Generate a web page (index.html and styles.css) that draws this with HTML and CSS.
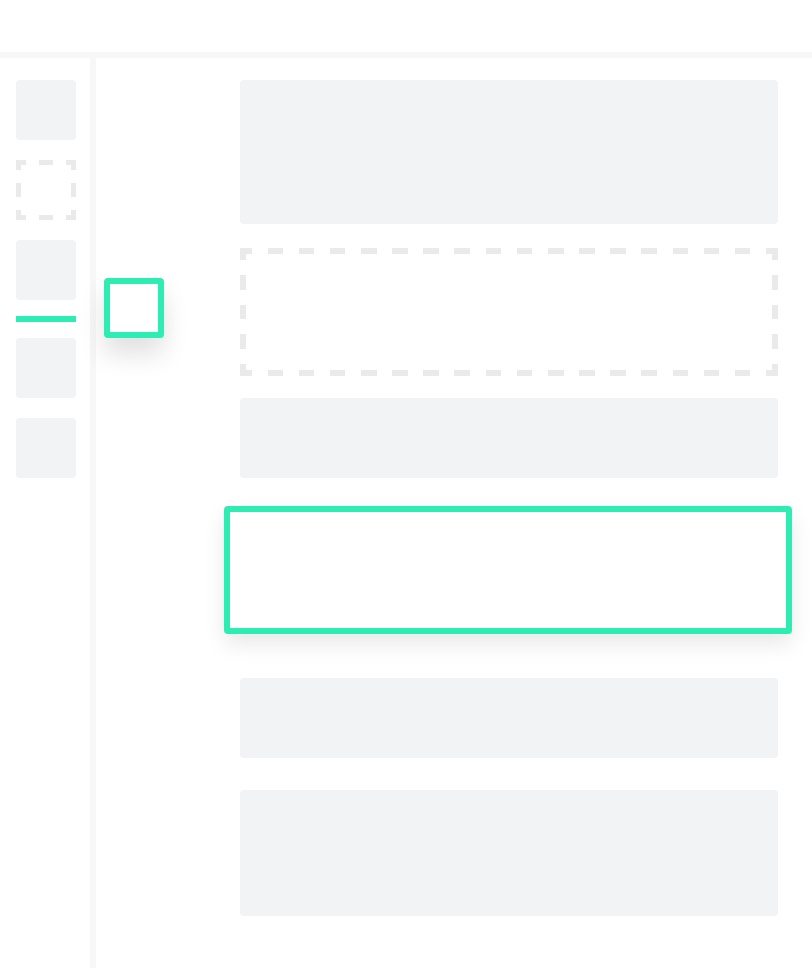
FILE: index.html
```html
<!DOCTYPE html>
<html>
<head>
<meta charset="utf-8">
<link rel="stylesheet" href="styles.css">
</head>
<body>
<header class="topbar"></header>
<div class="layout">
  <aside class="sidebar">
    <div class="tile"></div>
    <div class="tile tile-dashed"></div>
    <div class="tile"></div>
    <div class="indicator"></div>
    <div class="tile"></div>
    <div class="tile"></div>
  </aside>
  <main class="content">
    <div class="block block-tall"></div>
    <div class="block block-dashed"></div>
    <div class="block block-short"></div>
    <div class="block block-active"></div>
    <div class="block block-short after-active"></div>
    <div class="block block-mid"></div>
  </main>
  <div class="drag-tile"></div>
</div>
</body>
</html>
```
FILE: styles.css
```css
* { box-sizing: border-box; }
html, body { margin: 0; padding: 0; background: #fff; }
body { width: 812px; height: 968px; overflow: hidden; position: relative; font-family: "Liberation Sans", sans-serif; }

.topbar { height: 58px; border-bottom: 6px solid #f7f7f7; background: #fff; }

.layout { display: flex; height: 910px; position: relative; }

.sidebar {
  width: 96px;
  border-right: 6px solid #f7f7f7;
  padding: 22px 0 0 16px;
  display: flex;
  flex-direction: column;
  gap: 20px;
}
.tile { width: 60px; height: 60px; border-radius: 4px; background: #f2f3f5; flex: none; }

/* 60x60 dashed placeholder, 5px dashes, 10px corners */
.tile-dashed {
  border-radius: 0;
  background-color: transparent;
  background-image:
    linear-gradient(to right, #eaeaea 0 10px, transparent 10px 50px, #eaeaea 50px),
    linear-gradient(to right, #eaeaea 0 10px, transparent 10px 50px, #eaeaea 50px),
    linear-gradient(to bottom, #eaeaea 0 10px, transparent 10px 50px, #eaeaea 50px),
    linear-gradient(to bottom, #eaeaea 0 10px, transparent 10px 50px, #eaeaea 50px),
    linear-gradient(to right, transparent 0 13.333px, #eaeaea 13.333px 26.667px, transparent 26.667px),
    linear-gradient(to right, transparent 0 13.333px, #eaeaea 13.333px 26.667px, transparent 26.667px),
    linear-gradient(to bottom, transparent 0 13.333px, #eaeaea 13.333px 26.667px, transparent 26.667px),
    linear-gradient(to bottom, transparent 0 13.333px, #eaeaea 13.333px 26.667px, transparent 26.667px);
  background-size:
    60px 5px, 60px 5px, 5px 60px, 5px 60px,
    40px 5px, 40px 5px, 5px 40px, 5px 40px;
  background-position:
    0 0, 0 55px, 0 0, 55px 0,
    10px 0, 10px 55px, 0 10px, 55px 10px;
  background-repeat: no-repeat;
}

.indicator { width: 60px; height: 6px; background: #2eedb3; margin: -4px 0; flex: none; }

.content {
  flex: 1;
  padding: 22px 34px 0 144px;
  display: flex;
  flex-direction: column;
}
.block { border-radius: 4px; background: #f2f3f5; flex: none; }
.block-tall { height: 144px; }

/* 538x128 dashed drop zone, 6px dashes, 12px corners */
.block-dashed {
  height: 128px;
  margin-top: 24px;
  border-radius: 0;
  background-color: transparent;
  background-image:
    linear-gradient(to right, #eaeaea 0 12px, transparent 12px calc(100% - 12px), #eaeaea calc(100% - 12px)),
    linear-gradient(to right, #eaeaea 0 12px, transparent 12px calc(100% - 12px), #eaeaea calc(100% - 12px)),
    linear-gradient(to bottom, #eaeaea 0 12px, transparent 12px calc(100% - 12px), #eaeaea calc(100% - 12px)),
    linear-gradient(to bottom, #eaeaea 0 12px, transparent 12px calc(100% - 12px), #eaeaea calc(100% - 12px)),
    repeating-linear-gradient(to right, transparent 0 15.576px, #eaeaea 15.576px 31.152px),
    repeating-linear-gradient(to right, transparent 0 15.576px, #eaeaea 15.576px 31.152px),
    repeating-linear-gradient(to bottom, transparent 0 14.857px, #eaeaea 14.857px 29.714px),
    repeating-linear-gradient(to bottom, transparent 0 14.857px, #eaeaea 14.857px 29.714px);
  background-size:
    100% 6px, 100% 6px, 6px 100%, 6px 100%,
    calc(100% - 24px) 6px, calc(100% - 24px) 6px, 6px calc(100% - 24px), 6px calc(100% - 24px);
  background-position:
    0 0, 0 100%, 0 0, 100% 0,
    12px 0, 12px 100%, 0 12px, 100% 12px;
  background-repeat: no-repeat;
}

.block-short { height: 80px; margin-top: 22px; }
.block-active {
  height: 128px;
  margin: 28px -14px 0 -16px;
  background: #fff;
  border: 6px solid #2eedb3;
  border-radius: 4px;
  box-shadow: 0 10px 22px rgba(0,0,0,0.09);
}
.after-active { margin-top: 44px; }
.block-mid { height: 126px; margin-top: 32px; }

.drag-tile {
  position: absolute;
  left: 104px;
  top: 220px;
  width: 60px;
  height: 60px;
  background: #fff;
  border: 6px solid #2eedb3;
  border-radius: 4px;
  box-shadow: 0 16px 26px rgba(0,0,0,0.12);
}
```
